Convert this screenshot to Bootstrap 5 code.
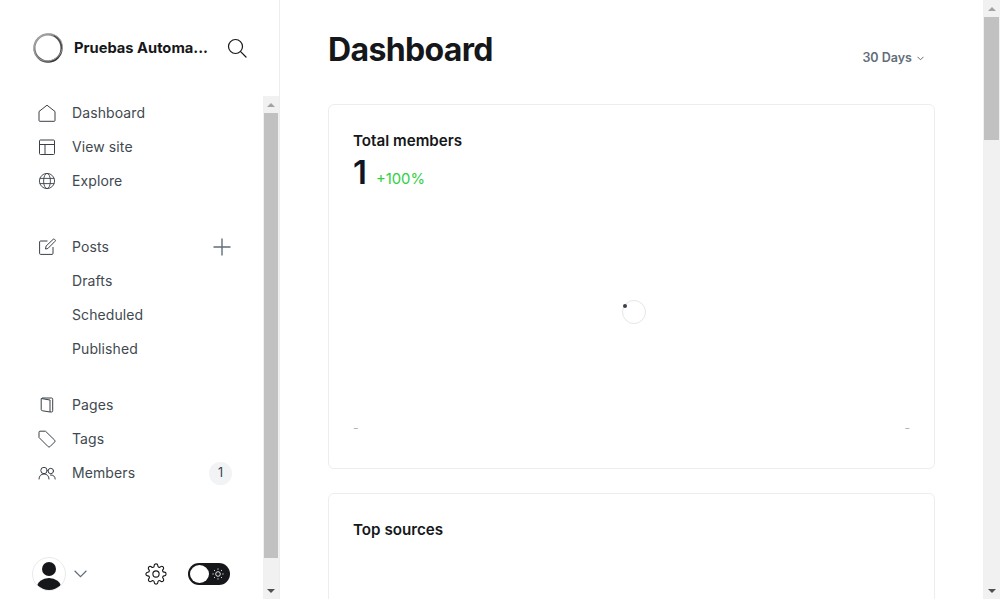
<!DOCTYPE html>
<html lang="en">
<head>
    <meta charset="UTF-8">
    <title>Dashboard</title>
    <link href="https://cdn.jsdelivr.net/npm/bootstrap@5.3.0/dist/css/bootstrap.min.css" rel="stylesheet">
    <style>
        html, body { height: 100%; overflow: hidden; }
        body { font-family: Inter, "Liberation Sans", sans-serif; color: #15171a; background: #fff; }
        .side-panel { width: 280px; height: 599px; border-right: 1px solid #ebeef0; }
        .side-head { height: 96px; padding: 32px 32px 0 32px; }
        .brand-logo { margin-right: 10px; }
        .brand-name { font-size: 14.7px; font-weight: 700; width: 135px; white-space: nowrap; overflow: hidden; }
        .brand-search { margin-left: 19px; }
        .side-nav { padding-left: 32px; padding-right: 31px; }
        .nav-row { height: 34px; color: #414950; font-size: 14px; letter-spacing: .1px; padding-left: 6px; padding-bottom: 2px; }
        .nav-row > svg, .count-pill { margin-top: 2px; }
        .row-icon { width: 18px; height: 18px; margin-right: 16px; flex: none; color: #394047; }
        .plus-icon { margin-right: 1px; }
        .sub-row { padding-left: 40px; }
        .nav-group { margin-bottom: 22px; }
        .first-group { margin-bottom: 32px; }
        .count-pill { width: 23px; height: 23px; background: #f1f3f4; color: #394047; font-size: 12.5px; }
        .side-foot { padding: 0 33px 0 32px; height: 34px; margin-bottom: 8px; }
        .avatar-ring { width: 34px; height: 34px; border: 1px solid #e8eaec; overflow: hidden; }
        .user-chevron { margin-left: 8px; }
        .gear-icon { margin-left: 58px; }
        .mode-toggle { width: 42px; height: 22px; background: #15171a; padding: 2px; margin-left: 21px; }
        .mode-knob { width: 19px; height: 18px; background: #fff; }
        .fake-scroll { width: 16px; background: #f1f1f1; }
        .main-scroll { width: 17px; height: 599px; background: #f1f1f1; }
        .scroll-btn { height: 17px; }
        .scroll-thumb { background: #c1c1c1; margin: 0 1px; }
        .side-thumb { height: 445px; }
        .page-thumb { height: 123px; }
        .sb-up { width: 0; height: 0; border: 4px solid transparent; border-top: 0; border-bottom: 4px solid #a3a3a3; }
        .sb-down { width: 0; height: 0; border: 4px solid transparent; border-bottom: 0; border-top: 4px solid #505050; }
        .main-area { padding: 0 48px; height: 599px; overflow: hidden; }
        .page-top { height: 104px; padding-top: 29px; }
        .page-title { font-size: 32px; font-weight: 700; line-height: 42px; letter-spacing: -.65px; margin: 0; }
        .range-pick { color: #626d79; font-size: 12.5px; font-weight: 600; padding-top: 20px; padding-right: 11px; }
        .range-pick svg { margin-left: 5px; }
        .chart-card { border: 1px solid #ebeef0; border-radius: 6px; padding: 24px; margin-bottom: 24px; }
        .members-card { height: 365px; }
        .sources-card { height: 200px; }
        .card-label { font-size: 15.2px; font-weight: 600; line-height: 24px; }
        .big-num { font-size: 33px; font-weight: 600; line-height: 38px; color: #0f1526; }
        .diff-num { color: #30cf43; font-size: 14.8px; margin-left: 9px; }
        .spinner-zone { height: 229px; padding-top: 13px; padding-left: 4px; }
        .ring-loader { width: 24px; height: 24px; border: 1px solid #e5e6e7; position: relative; }
        .ring-dot { width: 4px; height: 4px; background: #394047; position: absolute; left: 0; top: 3px; }
        .axis-row { color: #abb4be; font-size: 12px; line-height: 16px; }
    </style>
</head>
<body>
<div class="d-flex">
    <!-- Sidebar -->
    <div class="side-panel d-flex flex-column flex-shrink-0">
        <div class="side-head flex-shrink-0">
            <div class="d-flex align-items-center">
                <svg class="brand-logo flex-shrink-0" width="32" height="32" viewBox="0 0 32 32" fill="none">
                    <defs>
                        <linearGradient id="ringShade" x1="0.1" y1="0" x2="0.8" y2="1">
                            <stop offset="0" stop-color="#a8a8a8"/>
                            <stop offset="0.5" stop-color="#6f6f6f"/>
                            <stop offset="1" stop-color="#2f2f2f"/>
                        </linearGradient>
                    </defs>
                    <circle cx="16" cy="16" r="13.6" stroke="url(#ringShade)" stroke-width="2.2"/>
                    <ellipse cx="16.4" cy="15.6" rx="14.6" ry="13.4" stroke="#a5a5a5" stroke-width=".8" transform="rotate(-30 16 16)"/>
                    <path d="M22 3.800C27 6.500 30 12 29.500 17" stroke="#4a4a4a" stroke-width="1.100"/>
                </svg>
                <div class="brand-name">Pruebas Automa...</div>
                <svg class="brand-search flex-shrink-0" width="20" height="20" viewBox="0 0 20 20" fill="none" stroke="#15171a" stroke-width="1.2" stroke-linecap="round">
                    <circle cx="8.5" cy="8.5" r="7"/>
                    <path d="M13.6 13.6L19 19"/>
                </svg>
            </div>
        </div>
        <div class="d-flex flex-grow-1" style="min-height:0">
            <div class="d-flex flex-column flex-grow-1" style="min-width:0">
                <div class="side-nav flex-grow-1">
                    <div class="first-group">
                        <div class="nav-row d-flex align-items-center">
                            <svg class="row-icon" viewBox="0 0 18 18" fill="none" stroke="currentColor" stroke-linejoin="round"><path d="M1 7.5L9 1.2l8 6.3v9a.8.8 0 0 1-.8.8H1.8a.8.8 0 0 1-.8-.8z"/></svg>
                            Dashboard
                        </div>
                        <div class="nav-row d-flex align-items-center">
                            <svg class="row-icon" viewBox="0 0 18 18" fill="none" stroke="currentColor"><rect x="1.5" y="2" width="15" height="14.5" rx="1"/><path d="M1.5 6.5h15M7 6.5v10"/></svg>
                            View site
                        </div>
                        <div class="nav-row d-flex align-items-center">
                            <svg class="row-icon" viewBox="0 0 18 18" fill="none" stroke="currentColor" stroke-width=".9"><circle cx="9" cy="9" r="7.6"/><ellipse cx="9" cy="9" rx="3.4" ry="7.6"/><path d="M1.8 6.4h14.4M1.8 11.6h14.4"/></svg>
                            Explore
                        </div>
                    </div>
                    <div class="nav-group">
                        <div class="nav-row d-flex align-items-center">
                            <svg class="row-icon" viewBox="0 0 18 18" fill="none" stroke="currentColor" stroke-linejoin="round"><path d="M9.5 3H2.6a1 1 0 0 0-1 1v11.4a1 1 0 0 0 1 1H14a1 1 0 0 0 1-1V9"/><path d="M7.5 11l.6-3 7-6.600a1 1 0 0 1 1.500 0l.4.4a1 1 0 0 1 0 1.500L9.900 10.500z"/></svg>
                            Posts
                            <svg class="plus-icon ms-auto" width="18" height="18" viewBox="0 0 18 18" stroke="#626d79" stroke-width="1.4"><path d="M9 .5v17M.5 9h17"/></svg>
                        </div>
                        <div class="nav-row sub-row d-flex align-items-center">Drafts</div>
                        <div class="nav-row sub-row d-flex align-items-center">Scheduled</div>
                        <div class="nav-row sub-row d-flex align-items-center">Published</div>
                    </div>
                    <div>
                        <div class="nav-row d-flex align-items-center">
                            <svg class="row-icon" viewBox="0 0 18 18" fill="none" stroke="currentColor" stroke-linejoin="round"><path d="M4 2h9.500a1.200 1.200 0 0 1 1.200 1.200v11.600a1.200 1.200 0 0 1-1.200 1.200H12"/><path d="M3.200 2.500l8.800 1.500v12l-7.800-1.300a1.200 1.200 0 0 1-1-1.200z"/></svg>
                            Pages
                        </div>
                        <div class="nav-row d-flex align-items-center">
                            <svg class="row-icon" viewBox="0 0 18 18" fill="none" stroke="currentColor" stroke-linejoin="round"><path d="M1 2.200A1 1 0 0 1 2 1.200h5.500l9.200 9a1.200 1.200 0 0 1 0 1.700l-4.800 4.800a1.200 1.200 0 0 1-1.700 0L1 7.500z"/></svg>
                            Tags
                        </div>
                        <div class="nav-row d-flex align-items-center">
                            <svg class="row-icon" viewBox="0 0 18 18" fill="none" stroke="currentColor" stroke-linecap="round"><circle cx="6" cy="6.500" r="3.200"/><path d="M1 15c0-3 2-5 5-5s5 2 5 5"/><circle cx="12.800" cy="7" r="2.700"/><path d="M12.500 11c2.800-.3 4.500 1.300 4.700 4"/></svg>
                            Members
                            <span class="count-pill rounded-circle d-flex align-items-center justify-content-center ms-auto">1</span>
                        </div>
                    </div>
                </div>
                <div class="side-foot d-flex align-items-center">
                    <div class="avatar-ring rounded-circle flex-shrink-0">
                        <svg width="32" height="32" viewBox="0 0 32 32" fill="#15171a"><circle cx="16" cy="11" r="7"/><ellipse cx="16" cy="29.500" rx="12" ry="9.500"/></svg>
                    </div>
                    <svg class="user-chevron flex-shrink-0" width="13" height="8" viewBox="0 0 13 8" fill="none" stroke="#626d79" stroke-width="1.2"><path d="M.6.8L6.500 6.600 12.400.8"/></svg>
                    <svg class="gear-icon flex-shrink-0" width="22" height="22" viewBox="0 0 24 24" fill="none" stroke="#15171a" stroke-width="1.200" stroke-linejoin="round"><circle cx="12" cy="12" r="3.400"/><path d="M19.4 15a1.65 1.65 0 0 0 .33 1.82l.06.06a2 2 0 0 1 0 2.83 2 2 0 0 1-2.83 0l-.06-.06a1.65 1.65 0 0 0-1.82-.33 1.65 1.65 0 0 0-1 1.51V21a2 2 0 0 1-2 2 2 2 0 0 1-2-2v-.09A1.65 1.65 0 0 0 9 19.4a1.65 1.65 0 0 0-1.82.33l-.06.06a2 2 0 0 1-2.83 0 2 2 0 0 1 0-2.83l.06-.06a1.65 1.65 0 0 0 .33-1.82 1.65 1.65 0 0 0-1.51-1H3a2 2 0 0 1-2-2 2 2 0 0 1 2-2h.09A1.65 1.65 0 0 0 4.600 9a1.65 1.65 0 0 0-.33-1.82l-.06-.06a2 2 0 0 1 0-2.83 2 2 0 0 1 2.83 0l.06.06a1.65 1.65 0 0 0 1.82.33H9a1.65 1.65 0 0 0 1-1.51V3a2 2 0 0 1 2-2 2 2 0 0 1 2 2v.09a1.65 1.65 0 0 0 1 1.51 1.65 1.65 0 0 0 1.82-.33l.06-.06a2 2 0 0 1 2.83 0 2 2 0 0 1 0 2.83l-.06.06a1.65 1.65 0 0 0-.33 1.82V9a1.65 1.65 0 0 0 1.51 1H21a2 2 0 0 1 2 2 2 2 0 0 1-2 2h-.09a1.65 1.65 0 0 0-1.51 1z"/></svg>
                    <div class="mode-toggle rounded-pill d-flex align-items-center flex-shrink-0">
                        <div class="mode-knob rounded-circle"></div>
                        <svg class="ms-auto me-1" width="12" height="12" viewBox="0 0 14 14" fill="none" stroke="#fff" stroke-width="1"><circle cx="7" cy="7" r="2.700"/><path d="M7 .5v1.500M7 12v1.500M.5 7H2M12 7h1.500M2.400 2.400l1.100 1.100M10.500 10.500l1.100 1.100M2.400 11.600l1.100-1.100M10.500 3.500l1.100-1.100"/></svg>
                    </div>
                </div>
            </div>
            <!-- sidebar scrollbar -->
            <div class="fake-scroll d-flex flex-column flex-shrink-0">
                <div class="scroll-btn d-flex align-items-center justify-content-center"><div class="sb-up"></div></div>
                <div class="scroll-thumb side-thumb"></div>
                <div class="flex-grow-1"></div>
                <div class="scroll-btn d-flex align-items-center justify-content-center"><div class="sb-down"></div></div>
            </div>
        </div>
    </div>
    <!-- Main -->
    <div class="main-area flex-grow-1">
        <div class="page-top d-flex justify-content-between align-items-start">
            <h1 class="page-title">Dashboard</h1>
            <div class="range-pick d-flex align-items-center">
                30 Days
                <svg width="7" height="5" viewBox="0 0 7 5" fill="none" stroke="#626d79"><path d="M.5.8L3.500 3.800 6.500.8"/></svg>
            </div>
        </div>
        <div class="chart-card members-card">
            <div class="card-label">Total members</div>
            <div class="d-flex align-items-baseline">
                <span class="big-num">1</span>
                <span class="diff-num">+100%</span>
            </div>
            <div class="spinner-zone d-flex align-items-center justify-content-center">
                <div class="ring-loader rounded-circle"><div class="ring-dot rounded-circle"></div></div>
            </div>
            <div class="axis-row d-flex justify-content-between"><span>-</span><span>-</span></div>
        </div>
        <div class="chart-card sources-card">
            <div class="card-label">Top sources</div>
        </div>
    </div>
    <!-- page scrollbar -->
    <div class="main-scroll d-flex flex-column flex-shrink-0">
        <div class="scroll-btn d-flex align-items-center justify-content-center"><div class="sb-up"></div></div>
        <div class="scroll-thumb page-thumb"></div>
        <div class="flex-grow-1"></div>
        <div class="scroll-btn d-flex align-items-center justify-content-center"><div class="sb-down"></div></div>
    </div>
</div>
</body>
</html>
